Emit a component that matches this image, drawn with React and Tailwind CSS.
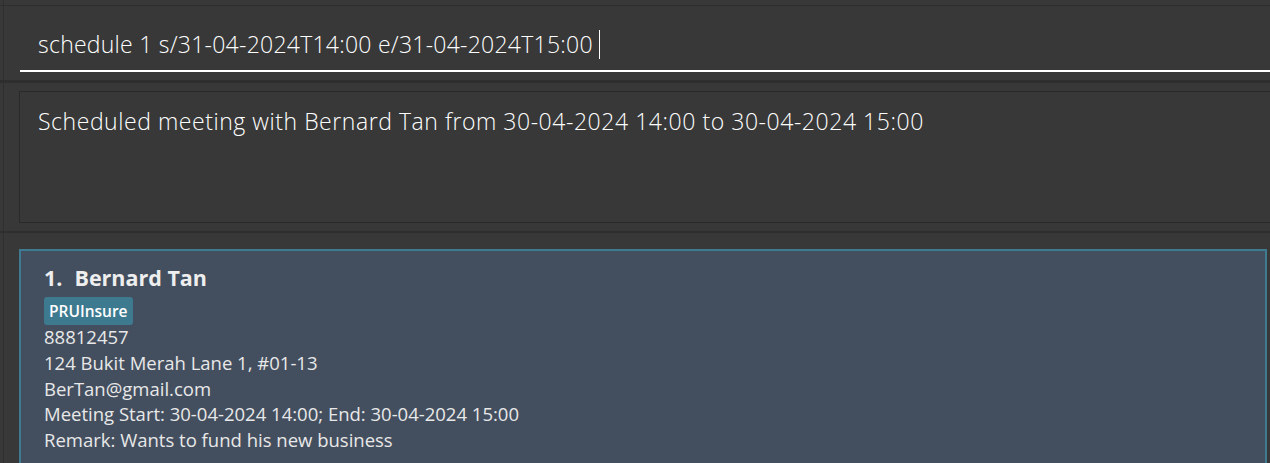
export default function App() {
  const details = [
    '88812457',
    '124 Bukit Merah Lane 1, #01-13',
    'BerTan@gmail.com',
    'Meeting Start: 30-04-2024 14:00; End: 30-04-2024 15:00',
    'Remark: Wants to fund his new business',
  ];

  return (
    <div
      className="w-[1270px] h-[463px] overflow-hidden bg-[#383838] flex flex-col"
      style={{ fontFamily: '"Open Sans", "Noto Sans", sans-serif' }}
    >
      {/* top strip */}
      <div className="h-[5px] shrink-0 border-l border-[#2f2f2f] ml-[3px]" />
      <div className="h-px shrink-0 bg-[#2e2e2e]" />

      {/* command box */}
      <div className="h-[74px] shrink-0 ml-[3px] border-l border-[#2f2f2f] pl-[16px] pt-[22px]">
        <div className="border-b-2 border-white h-[44px] flex items-start pl-[18px]">
          <span className="text-[23px] font-light text-white leading-[32px] tracking-[0.25px]">
            schedule 1 s/31-04-2024T14:00 e/31-04-2024T15:00
          </span>
          <span className="w-px h-[29px] bg-white ml-[6px] mt-[2px]" />
        </div>
      </div>
      <div className="h-[3px] shrink-0 bg-[#2e2e2e]" />

      {/* result display */}
      <div className="h-[148px] shrink-0 ml-[3px] border-l border-[#2f2f2f] pl-[15px] pt-[8px]">
        <div className="h-[132px] border border-[#2a2a2a] border-r-0 bg-[#383838] pl-[18px] pt-[13px]">
          <p className="text-[23px] font-light text-white leading-[32px] tracking-[0.55px]">
            Scheduled meeting with Bernard Tan from 30-04-2024 14:00 to 30-04-2024 15:00
          </p>
        </div>
      </div>
      <div className="h-[2px] shrink-0 bg-[#2e2e2e]" />

      {/* person list */}
      <div className="flex-1 ml-[3px] border-l border-[#2f2f2f] pl-[15px] pr-[3px] pt-[16px]">
        <div className="h-[240px] border-2 border-[#3e7b90] bg-[#434f5f] pl-[23px] pt-[12px]">
          <div className="flex items-baseline text-[21.5px] font-bold text-[#eeeeee] leading-[30px]">
            <span>1.</span>
            <span className="ml-[12px]">Bernard Tan</span>
          </div>
          <div className="mt-[4px] flex">
            <span className="bg-[#3e7a8f] rounded-[3px] px-[5px] h-[28px] leading-[28px] text-[15.5px] font-semibold text-white">
              PRUInsure
            </span>
          </div>
          <div className="text-[18.5px] text-[#e8e8e8] leading-[25.8px] mt-[-1px]">
            {details.map((d) => (
              <div key={d}>{d}</div>
            ))}
          </div>
        </div>
      </div>
    </div>
  );
}
